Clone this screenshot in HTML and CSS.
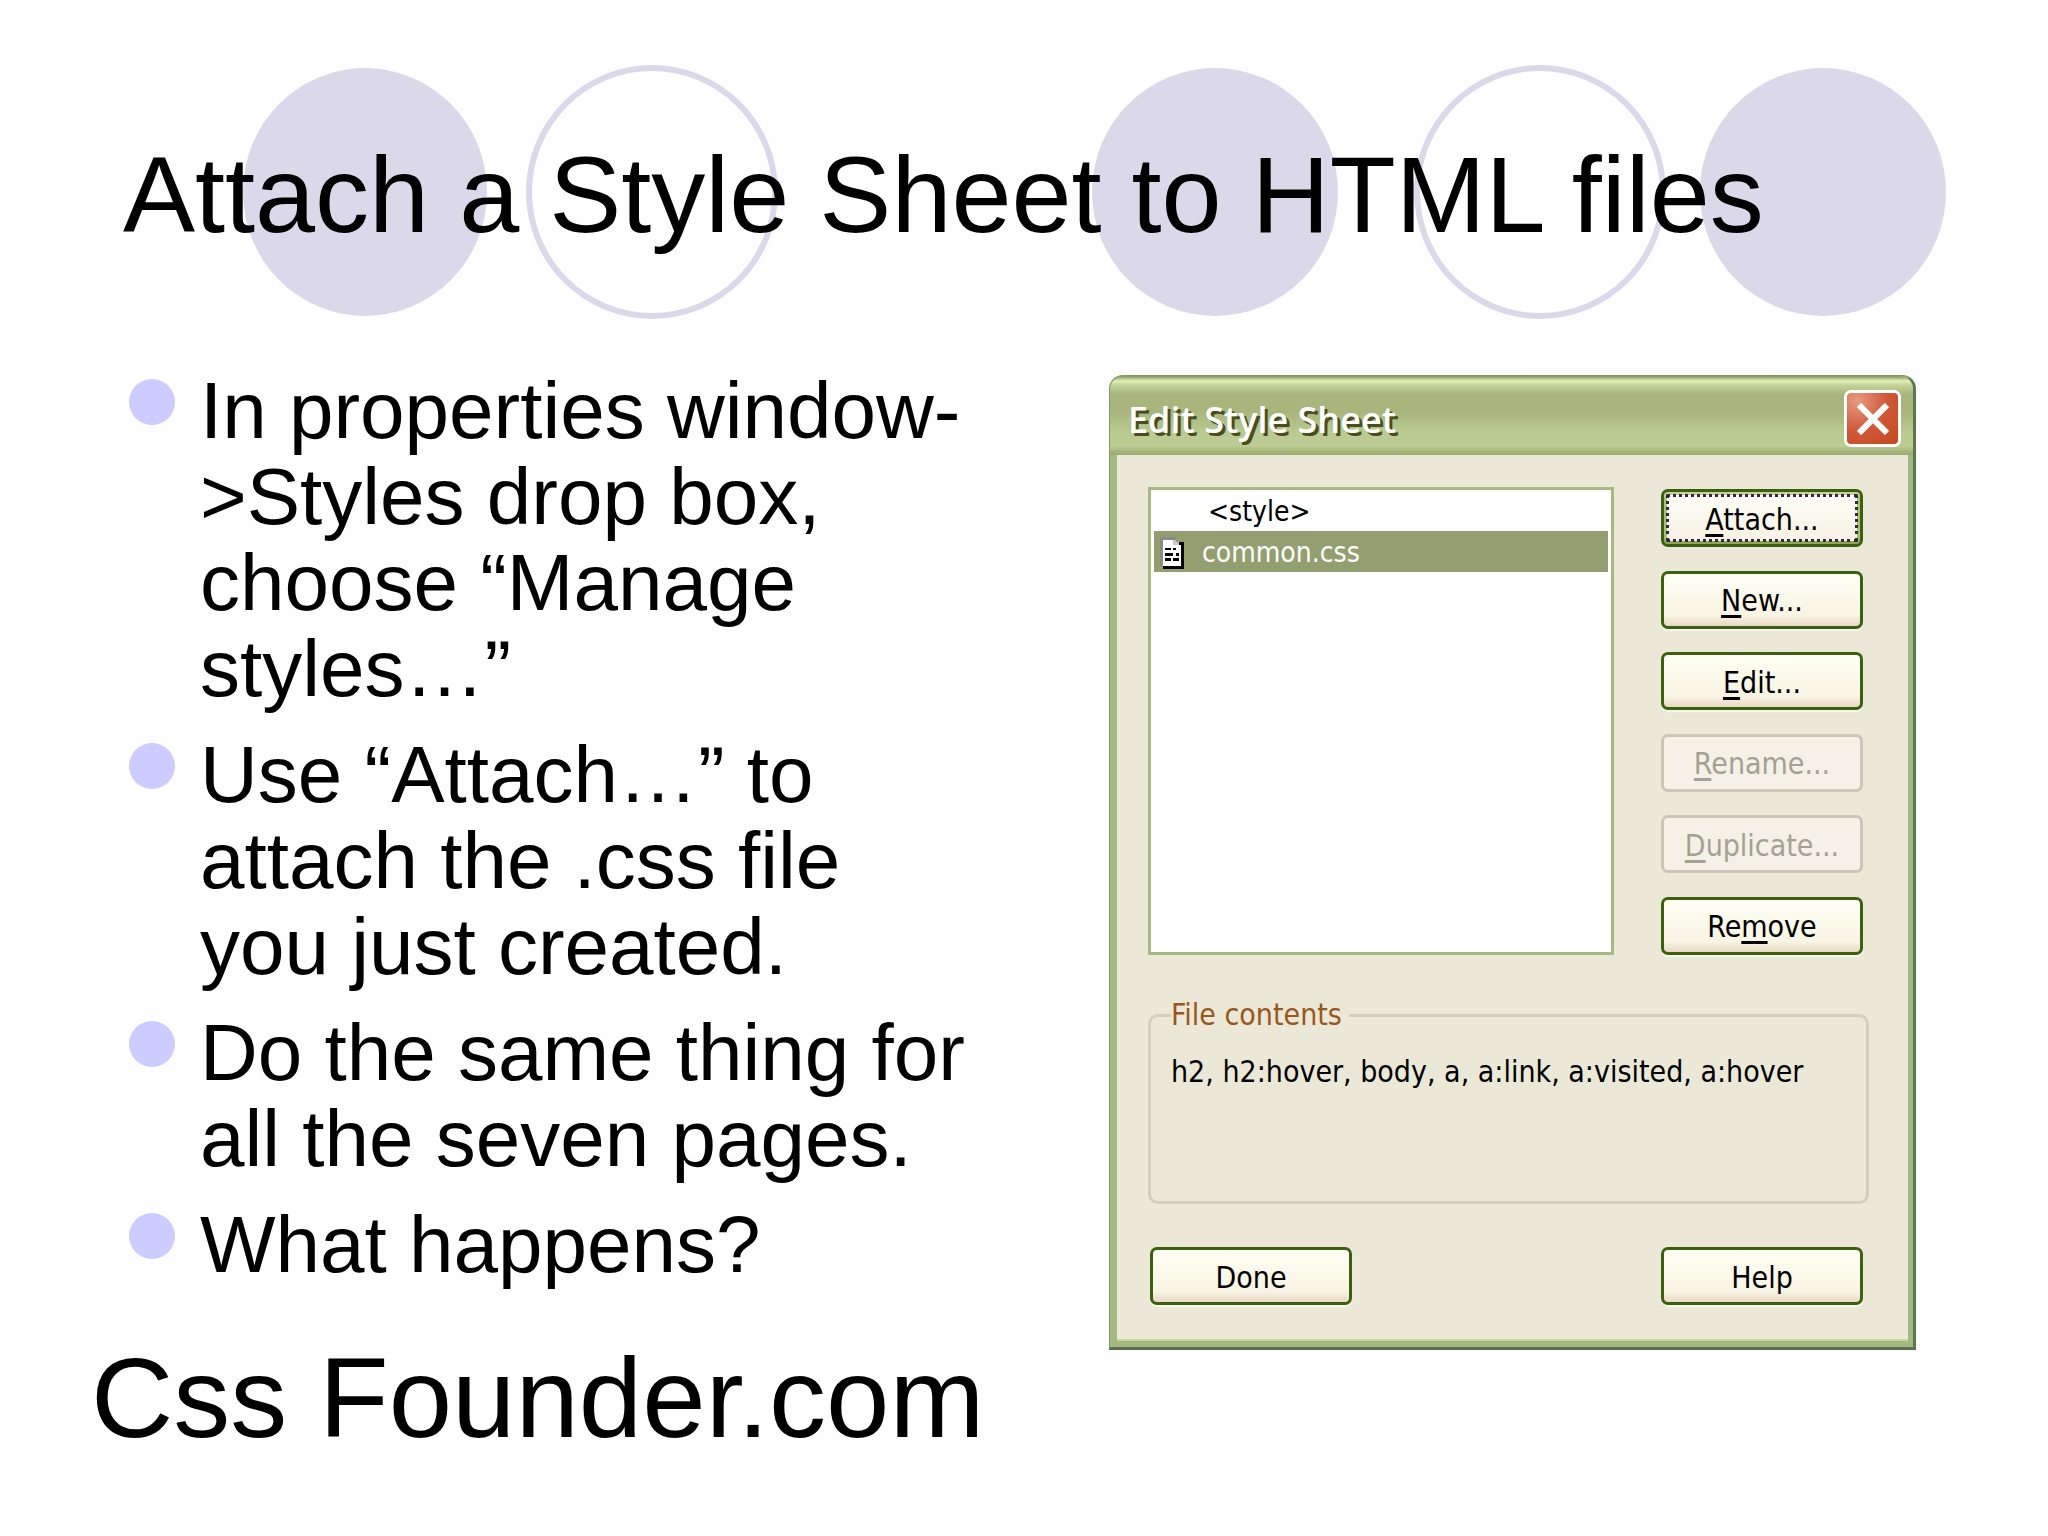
FILE: index.html
```html
<!DOCTYPE html>
<html lang="en">
<head>
  <meta charset="UTF-8">
  <title>Attach a Style Sheet to HTML files</title>
  <link rel="stylesheet" href="styles.css">
</head>
<body>
  <header class="slide-header">
    <svg class="circles" viewBox="0 0 2048 340" aria-hidden="true">
      <g fill="#dbd8ea">
        <ellipse cx="365" cy="192" rx="122" ry="124"/>
        <ellipse cx="1215" cy="192" rx="123" ry="124"/>
        <ellipse cx="1823" cy="192" rx="123" ry="124"/>
      </g>
      <g fill="none" stroke="#dbd8ea" stroke-width="6">
        <ellipse cx="652" cy="192" rx="123" ry="124"/>
        <ellipse cx="1540" cy="192" rx="123" ry="124"/>
      </g>
    </svg>
    <h1>Attach a Style Sheet to HTML files</h1>
  </header>

  <main class="slide-body">
    <div class="notes">
      <ul class="steps">
        <li>In properties window-<wbr>&gt;Styles drop box, choose “Manage styles…”</li>
        <li>Use “Attach…” to attach the .css file you just created.</li>
        <li>Do the same thing for all the seven pages.</li>
        <li>What happens?</li>
      </ul>
      <p class="brand">Css Founder.com</p>
    </div>

    <section class="dialog" role="dialog" aria-labelledby="dialogTitle">
      <div class="titlebar">
        <h2 id="dialogTitle">Edit Style Sheet</h2>
        <button type="button" class="close" aria-label="Close">
          <svg viewBox="0 0 32 32" aria-hidden="true">
            <path d="M2 2L30 30M30 2L2 30" stroke="#fff" stroke-width="6"/>
          </svg>
        </button>
      </div>

      <div class="dialog-body">
        <div class="picker">
          <ul class="sheets" role="listbox" aria-label="Style sheets">
            <li role="option" aria-selected="false" class="inline-sheet">&lt;style&gt;</li>
            <li role="option" aria-selected="true" class="selected">
              <svg class="file-icon" viewBox="0 0 9 12" shape-rendering="crispEdges" aria-hidden="true">
                <path d="M1 2H9V12H1z" fill="#000"/>
                <path d="M0 0H6V1H0z" fill="#8a8a86"/>
                <path d="M0 0H1V11H0z" fill="#8a8a86"/>
                <path d="M1 1H5V3H8V11H1z" fill="#fff"/>
                <path d="M5 1H6V2H7V3H5z" fill="#c8c8c8"/>
                <path d="M2 4H4V5H2zM2 6H5V7H2zM6 6H7V7H6zM2 8H4V9H2zM5 8H7V9H5zM5 4H6V5H5z" fill="#000"/>
              </svg>
              common.css
            </li>
          </ul>

          <div class="actions">
            <button type="button" class="btn default"><u>A</u>ttach...</button>
            <button type="button" class="btn"><u>N</u>ew...</button>
            <button type="button" class="btn"><u>E</u>dit...</button>
            <button type="button" class="btn" disabled><u>R</u>ename...</button>
            <button type="button" class="btn" disabled><u>D</u>uplicate...</button>
            <button type="button" class="btn">Re<u>m</u>ove</button>
          </div>
        </div>

        <fieldset class="contents">
          <legend>File contents</legend>
          h2, h2:hover, body, a, a:link, a:visited, a:hover
        </fieldset>

        <div class="footer">
          <button type="button" class="btn">Done</button>
          <button type="button" class="btn">Help</button>
        </div>
      </div>
    </section>
  </main>
</body>
</html>
```

FILE: styles.css
```css
* {
  box-sizing: border-box;
}

body {
  margin: 0;
  background-color: #fefefe;
  color: #000;
  font-family: "Liberation Sans", Arial, sans-serif;
}

h1, h2, p, ul {
  margin: 0;
  padding: 0;
  font-weight: normal;
  list-style: none;
}

/* Header with the circles behind the title */
.slide-header {
  position: relative;
  padding: 135px 123px 0;
}

.circles {
  position: absolute;
  top: 0;
  left: 0;
  width: 100%;
}

h1 {
  position: relative;
  font-size: 108px;
  line-height: 120px;
}

/* Two columns: notes and dialog */
.slide-body {
  display: grid;
  grid-template-columns: minmax(0, 888fr) minmax(0, 807fr);
  gap: 130px;
  align-items: start;
  padding: 113px 132px 0 91px;
}

.steps {
  display: flex;
  flex-direction: column;
  gap: 20px;
  padding-left: 38px;
  font-size: 80px;
  line-height: 86px;
}

.steps li {
  display: grid;
  grid-template-columns: 46px 1fr;
  gap: 25px;
}

.steps li::before {
  content: "";
  height: 46px;
  margin-top: 11px;
  border-radius: 50%;
  background-color: #ccccff;
}

.brand {
  margin-top: 46px;
  font-size: 114px;
  line-height: 128px;
  white-space: nowrap;
}

/* Dialog */
.dialog {
  margin-top: 7px;
  border: 1px solid #7f9a62;
  border-right: 3px solid #5a7850;
  border-bottom: 3px solid #5a7050;
  border-radius: 14px 14px 0 0;
  background-color: #a3b980;
  font-family: "DejaVu Sans Condensed", "DejaVu Sans", Tahoma, sans-serif;
  font-size: 30px;
  line-height: 36px;
}

.titlebar {
  display: flex;
  align-items: center;
  justify-content: space-between;
  height: 79px;
  padding: 6px 12px 0 18px;
  border-radius: 14px 14px 0 0;
  background: linear-gradient(#7f945b 0, #e2efb4 5px, #c4d49a 9px, #a8b67e 18px, #a8b67e 36px, #bccb92 58px, #bccb92 70px, #98ab6e 79px);
}

.titlebar h2 {
  padding-top: 2px;
  color: #fff;
  font-family: "Open Sans", sans-serif;
  font-size: 36px;
  font-weight: 600;
  line-height: 48px;
  text-shadow: 3px 3px 0 #4a4d20;
}

.close {
  display: grid;
  place-items: center;
  width: 57px;
  height: 57px;
  padding: 0;
  border: 3px solid #fff;
  border-radius: 7px;
  background: radial-gradient(circle at 20% 15%, #e69a82, #d0583a 50%, #c24a1c);
}

.close svg {
  width: 32px;
}

.dialog-body {
  margin: 0 5px 6px 7px;
  padding: 32px 39px 34px 31px;
  border-bottom: 2px solid #c8d6a4;
  background-color: #ebe8d8;
}

.picker {
  display: flex;
  justify-content: space-between;
  padding-right: 6px;
}

.sheets {
  width: 466px;
  height: 468px;
  padding: 0 3px;
  border: 3px solid #a6b982;
  background-color: #fff;
  font-size: 28px;
}

.sheets li {
  display: flex;
  align-items: center;
  gap: 18px;
  height: 41px;
  padding: 2px 0 0 6px;
}

.sheets .inline-sheet {
  padding-left: 54px;
}

.sheets .selected {
  background-color: #939f70;
  color: #fff;
}

.file-icon {
  width: 24px;
}

.actions {
  display: flex;
  flex-direction: column;
  justify-content: space-between;
  padding-top: 2px;
}

.btn {
  width: 202px;
  height: 58px;
  padding: 3px 0 0;
  border: 3px solid #3b6010;
  border-radius: 7px;
  background: linear-gradient(#fffff4, #f8f4e4 80%, #e8d8c4);
  box-shadow: 0 2px 1px #f8f7ec;
  color: #000;
  font: inherit;
}

.btn u {
  text-underline-offset: 4px;
  text-decoration-thickness: 3px;
}

.btn.default {
  background: linear-gradient(#fffff8, #f5f0e2);
  outline: 3px dotted #3a2050;
  outline-offset: -8px;
  box-shadow: inset 0 3px #c0d690, inset 0 -3px #8cab50, inset 3px 0 #a6c470, inset -3px 0 #a6c470;
}

.btn:disabled {
  border-color: #c9c7b8;
  background: #f5f1e6;
  box-shadow: none;
  color: #a3a194;
}

.contents {
  min-height: 207px;
  margin: 42px 0 0;
  padding: 21px 20px;
  border: 3px solid #d2cfbd;
  border-radius: 10px;
}

.contents legend {
  padding: 0 7px 0 0;
  color: #99571c;
}

.footer {
  display: flex;
  justify-content: space-between;
  margin-top: 43px;
  padding: 0 6px 0 2px;
}
```
